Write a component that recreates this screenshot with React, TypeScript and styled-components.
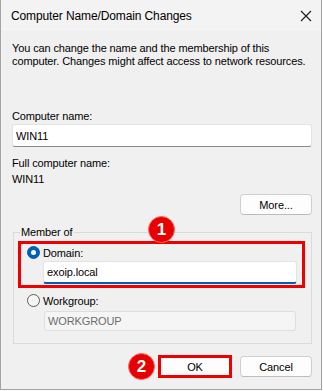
import React from 'react'
import styled, { createGlobalStyle } from 'styled-components'

const GlobalStyle = createGlobalStyle`
  html, body {
    margin: 0;
    padding: 0;
    background: #fbfbfb;
  }
  body {
    font-family: 'Liberation Sans', Arial, sans-serif;
    font-size: 11px;
    letter-spacing: -0.12px;
    color: #000;
  }
`

const Window = styled.div`
  width: 320px;
  height: 389px;
  background: #f0f0f0;
  border: 1px solid #a3a3a3;
  border-top: none;
  display: flex;
  flex-direction: column;
  position: relative;
`

const TitleBar = styled.div`
  flex-shrink: 0;
  height: 31px;
  background: #f3f3f3;
  display: flex;
  align-items: center;
  justify-content: space-between;
  padding: 0 9px 0 10px;
`

const Title = styled.span`
  font-size: 12px;
  line-height: 16px;
`

const CloseButton = styled.svg`
  width: 12px;
  height: 12px;
  display: block;
`

const Body = styled.div`
  display: flex;
  flex-direction: column;
  padding: 0 9px 11px 11px;
  flex: 1;
`

const Description = styled.p`
  margin: 11px 0 0;
  line-height: 13px;
`

const Label = styled.div<{ $top?: number }>`
  margin-top: ${p => p.$top ?? 0}px;
  line-height: 16px;
`

const TextBox = styled.div<{ $focused?: boolean; $disabled?: boolean }>`
  box-sizing: border-box;
  height: ${p => (p.$disabled ? 20 : 23)}px;
  background: ${p => (p.$disabled ? '#f5f5f5' : '#fff')};
  border: 1px solid ${p => (p.$disabled ? '#dedede' : '#e3e3e3')};
  border-bottom: ${p =>
    p.$focused ? '2px solid #005fb8' : p.$disabled ? '1px solid #dedede' : '1px solid #8a8a8a'};
  border-radius: 3px;
  display: flex;
  align-items: center;
  padding-left: 3px;
  color: ${p => (p.$disabled ? '#6d6d6d' : '#000')};
  line-height: 16px;
`

const PushButton = styled.button<{ $highlight?: boolean }>`
  box-sizing: border-box;
  font: inherit;
  letter-spacing: inherit;
  color: #000;
  width: ${p => (p.$highlight ? 74 : 72)}px;
  height: ${p => (p.$highlight ? 23 : 21)}px;
  background: #fdfdfd;
  border: ${p => (p.$highlight ? '3px solid #ee0000' : '1px solid #d0d0d0')};
  border-bottom-color: ${p => (p.$highlight ? '#ee0000' : '#bcbcbc')};
  border-radius: ${p => (p.$highlight ? 0 : 4)}px;
  padding: 0;
  display: flex;
  align-items: center;
  justify-content: center;
`

const MoreRow = styled.div`
  display: flex;
  justify-content: flex-end;
  margin-top: 7px;
`

const GroupBox = styled.fieldset`
  margin: 9px 0 0 1px;
  padding: 0 0 12px;
  border: 1px solid #dadada;
  min-width: 0;
`

const Legend = styled.legend`
  margin-left: 6px;
  padding: 0 1px;
  line-height: 16px;
`

const Highlight = styled.div`
  position: relative;
  margin: 1px 6px 0 4px;
  border: 3px solid #ee0000;
  padding: 0 5px 1px 0;
  display: flex;
  flex-direction: column;
`

const RadioRow = styled.div<{ $indent: number; $top?: number }>`
  display: flex;
  align-items: center;
  gap: 3px;
  height: 17px;
  margin-top: ${p => p.$top ?? 0}px;
  padding-left: ${p => p.$indent}px;
`

const Radio = styled.span<{ $checked?: boolean }>`
  box-sizing: border-box;
  width: 13px;
  height: 13px;
  border-radius: 50%;
  background: ${p => (p.$checked ? '#005fb8' : '#f6f6f6')};
  border: 1px solid ${p => (p.$checked ? '#005fb8' : '#5c5c5c')};
  display: flex;
  align-items: center;
  justify-content: center;
  &::after {
    content: '';
    display: ${p => (p.$checked ? 'block' : 'none')};
    width: 5px;
    height: 5px;
    border-radius: 50%;
    background: #fff;
  }
`

const Indented = styled.div<{ $left: number; $right: number; $top?: number }>`
  margin: ${p => p.$top ?? 0}px ${p => p.$right}px 0 ${p => p.$left}px;
`

const Badge = styled.span`
  box-sizing: border-box;
  width: 27px;
  height: 27px;
  border-radius: 50%;
  background: #e60000;
  border: 1px solid #ff6a6a;
  color: #fff;
  font-family: 'Liberation Sans', Arial, sans-serif;
  font-weight: bold;
  font-size: 17px;
  letter-spacing: 0;
  display: flex;
  align-items: center;
  justify-content: center;
  flex-shrink: 0;
`

const FloatingBadge = styled(Badge)`
  position: absolute;
  left: 127px;
  top: -28px;
`

const Footer = styled.div`
  display: flex;
  justify-content: flex-end;
  align-items: center;
  margin-top: 9px;
  gap: 3px;
`

const CancelButton = styled(PushButton)`
  margin-left: 5px;
`

export default function App() {
  return (
    <>
      <GlobalStyle />
      <Window>
        <TitleBar>
          <Title>Computer Name/Domain Changes</Title>
          <CloseButton viewBox="0 0 12 12">
            <path d="M1 1 L11 11 M11 1 L1 11" stroke="#1a1a1a" strokeWidth="1.1" fill="none" />
          </CloseButton>
        </TitleBar>
        <Body>
          <Description>
            You can change the name and the membership of this
            <br />
            computer. Changes might affect access to network resources.
          </Description>
          <Label $top={40}>Computer name:</Label>
          <TextBox>WIN11</TextBox>
          <Label $top={8}>Full computer name:</Label>
          <Label>WIN11</Label>
          <MoreRow>
            <PushButton>More...</PushButton>
          </MoreRow>
          <GroupBox>
            <Legend>Member of</Legend>
            <Highlight>
              <FloatingBadge>1</FloatingBadge>
              <RadioRow $indent={6}>
                <Radio $checked />
                <span>Domain:</span>
              </RadioRow>
              <Indented $left={22} $right={0}>
                <TextBox $focused>exoip.local</TextBox>
              </Indented>
            </Highlight>
            <RadioRow $indent={13} $top={4}>
              <Radio />
              <span>Workgroup:</span>
            </RadioRow>
            <Indented $left={30} $right={15} $top={2}>
              <TextBox $disabled>WORKGROUP</TextBox>
            </Indented>
          </GroupBox>
          <Footer>
            <Badge>2</Badge>
            <PushButton $highlight>OK</PushButton>
            <CancelButton>Cancel</CancelButton>
          </Footer>
        </Body>
      </Window>
    </>
  )
}
